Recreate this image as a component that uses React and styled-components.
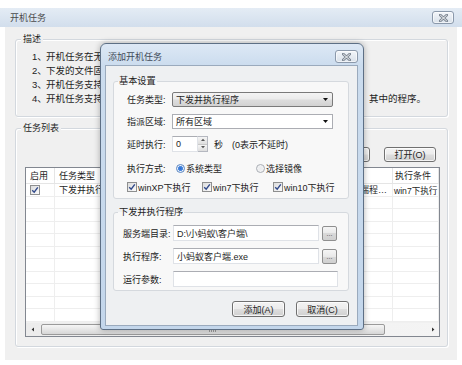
import React from 'react';
import styled, { createGlobalStyle } from 'styled-components';

const GlobalStyle = createGlobalStyle`
  html, body { margin: 0; padding: 0; background: #fff; }
  body {
    font-family: "Liberation Sans", "Noto Sans CJK SC", sans-serif;
    font-size: 9px;
    color: #1e1e1e;
  }
  * { box-sizing: border-box; }
`;

const Window = styled.div`
  position: relative;
  width: 462px;
  height: 365px;
  padding-top: 8px;
  background: #fff;
  overflow: hidden;
`;

const TitleBar = styled.div`
  height: 19px;
  display: flex;
  align-items: center;
  justify-content: space-between;
  padding: 0 8px 0 10px;
  background: linear-gradient(#e4ecf5, #d2deec);
  color: #4a4a4a;
`;

const CloseBtn = styled.div`
  width: ${p => p.$w}px;
  height: 13px;
  border: 1px solid #8b99ab;
  border-radius: 3px;
  background: linear-gradient(#f3f6fa, #d9e1ea);
  display: flex;
  align-items: center;
  justify-content: center;
  box-shadow: inset 0 0 0 1px rgba(255,255,255,.6);
`;

const Body = styled.div`
  margin: 0 5px;
  height: 333px;
  background: #f0f0f0;
  padding: 12px 9px 0 10px;
  display: flex;
  flex-direction: column;
  gap: 11px;
`;

const Group = styled.div`
  position: relative;
  height: ${p => p.$h}px;
  flex: none;
  border: 1px solid #d3d8de;
  border-radius: 3px;
  box-shadow: inset 1px 1px 0 #fff, 1px 1px 0 #fff;
  padding: ${p => p.$pad};
`;

const Caption = styled.span`
  position: absolute;
  left: 5px;
  top: -7px;
  padding: 0 2px;
  line-height: 12px;
  background: #f0f0f0;
`;

const DescLine = styled.div`
  display: flex;
  height: 14px;
  line-height: 14px;
  font-size: 9.5px;
  white-space: nowrap;
`;

const Num = styled.span`
  width: 14px;
  flex: none;
`;

const ButtonRow = styled.div`
  display: flex;
  justify-content: flex-end;
  gap: ${p => p.$gap}px;
  padding-right: ${p => p.$pr || 0}px;
  margin-top: ${p => p.$mt || 0}px;
`;

const Button = styled.div`
  width: ${p => p.$w}px;
  height: ${p => p.$h}px;
  border: 1px solid #707070;
  border-radius: 3px;
  background: linear-gradient(#f3f3f3 0%, #ececec 48%, #dedede 52%, #d0d0d0 100%);
  box-shadow: inset 0 0 0 1px rgba(255,255,255,.75);
  display: flex;
  align-items: center;
  justify-content: center;
  color: #1e1e1e;
`;

const Table = styled.div`
  margin-top: 5px;
  height: 170px;
  border: 1px solid #828790;
  background: #fff;
  display: flex;
  flex-direction: column;
`;

const COLS = '29px 95px 60px 60px 123px 1fr';

const HeaderRow = styled.div`
  display: grid;
  grid-template-columns: ${COLS};
  height: 16px;
  border-bottom: 1px solid #e5e5e5;
`;

const HeadCell = styled.div`
  display: flex;
  align-items: center;
  padding-left: ${p => p.$pl || 4}px;
  border-right: 1px solid #e5e5e5;
  white-space: nowrap;
  overflow: hidden;
`;

const Rows = styled.div`
  display: grid;
  grid-template-columns: ${COLS};
  grid-template-rows: repeat(11, 1fr);
  height: 138px;
`;

const Cell = styled.div`
  display: flex;
  align-items: center;
  padding-left: ${p => p.$pl ?? 4}px;
  border-right: 1px solid #eeeeee;
  border-bottom: 1px solid #eeeeee;
  white-space: nowrap;
  overflow: hidden;
  min-width: 0;
  font-size: ${p => p.$fs || 9}px;
`;

const Ellipsis = styled.span`
  overflow: hidden;
  text-overflow: ellipsis;
  white-space: nowrap;
  padding-right: 2px;
`;

const ScrollBar = styled.div`
  height: 14px;
  display: flex;
  background: linear-gradient(90deg, #ececec, #f4f4f4);
  border-top: 1px solid #f0f0f0;
`;

const ScrollArrow = styled.div`
  width: 13px;
  display: flex;
  align-items: center;
  justify-content: center;
`;

const Thumb = styled.div`
  width: ${p => p.$w}px;
  margin: 1px 0 1px 2px;
  border: 1px solid #9a9a9a;
  border-radius: 2px;
  background: linear-gradient(#f6f6f6, #e6e6e6 50%, #d6d6d6);
  display: flex;
  align-items: center;
  justify-content: center;
`;

const ScrollTrack = styled.div`
  flex: 1;
  display: flex;
`;

/* ----- dialog ----- */

const Dialog = styled.div`
  position: absolute;
  left: 100px;
  top: 43px;
  width: 264px;
  height: 287px;
  border: 1px solid #5d6f85;
  border-radius: 6px 6px 3px 3px;
  background: linear-gradient(180deg, #dde8f5 0px, #cbdcee 22px, #c3d6eb 100%);
  box-shadow: 0 0 6px rgba(0,0,0,.3);
  display: flex;
  flex-direction: column;
  padding: 0 5px 3px 4px;
`;

const DlgTitle = styled.div`
  height: 21px;
  flex: none;
  display: flex;
  align-items: center;
  justify-content: space-between;
  padding: 4px 0 0 3px;
  color: #3f4a57;
`;

const DlgContent = styled.div`
  flex: 1;
  border: 1px solid #9aaabd;
  background: #eef0f2;
  padding: 15px 8px 0 7px;
  display: flex;
  flex-direction: column;
`;

const Panel = styled.div`
  position: relative;
  height: ${p => p.$h}px;
  flex: none;
  margin-top: ${p => p.$mt || 0}px;
  border: 1px solid #d5d9de;
  border-radius: 3px;
  background: #f8f8f8;
  padding: ${p => p.$pad};
`;

const PanelCaption = styled.span`
  position: absolute;
  left: 4px;
  top: -7px;
  line-height: 12px;
  padding: 0 1px;
  background: linear-gradient(#eef0f2 50%, #f8f8f8 50%);
  font-size: 9.2px;
`;

const FormRow = styled.div`
  display: flex;
  align-items: center;
  height: 16px;
  margin-top: ${p => p.$mt || 0}px;
  white-space: nowrap;
`;

const Label = styled.span`
  width: ${p => p.$w}px;
  flex: none;
  color: #222;
`;

const Combo = styled.div`
  width: ${p => p.$w}px;
  height: 15px;
  border: 1px solid ${p => (p.$button ? '#7a7a7a' : '#abadb3')};
  border-radius: ${p => (p.$button ? 2 : 0)}px;
  background: ${p => (p.$button ? 'linear-gradient(#f4f4f4, #ebebeb 48%, #dddddd 52%, #d2d2d2)' : '#fff')};
  display: flex;
  align-items: center;
  justify-content: space-between;
  padding: 0 4px 0 3px;
`;

const Field = styled.div`
  width: ${p => p.$w}px;
  height: 16px;
  border: 1px solid #dfe2e7;
  border-top-color: #abadb3;
  background: #fff;
  display: flex;
  align-items: center;
  padding-left: 3px;
  white-space: nowrap;
  overflow: hidden;
`;

const Spin = styled.div`
  display: flex;
  height: 16px;
`;

const SpinButtons = styled.div`
  width: 10px;
  display: flex;
  flex-direction: column;
  border: 1px solid #b5b8c0;
  border-left: none;
`;

const SpinBtn = styled.div`
  flex: 1;
  display: flex;
  align-items: center;
  justify-content: center;
  background: linear-gradient(#f5f5f5, #dedede);
  border-bottom: ${p => (p.$top ? '1px solid #c8c8c8' : 'none')};
`;

const Text = styled.span`
  margin-left: ${p => p.$ml || 0}px;
  color: ${p => p.$color || '#222'};
`;

const Option = styled.span`
  width: ${p => (p.$w ? `${p.$w}px` : 'auto')};
  flex: none;
  display: flex;
  align-items: center;
  gap: ${p => p.$gap || 1}px;
`;

const RadioDot = styled.span`
  width: 9px;
  height: 9px;
  border-radius: 50%;
  border: 1px solid ${p => (p.$on ? '#5b86c1' : '#a9adb4')};
  background: ${p => (p.$on
    ? 'radial-gradient(circle, #2b6cd0 0, #4c8ae0 2.2px, #e6eef9 2.8px, #f4f6f9 100%)'
    : 'radial-gradient(circle, #e9ebee, #f6f6f6)')};
  flex: none;
`;

const CheckBox = styled.span`
  width: 10px;
  height: 10px;
  border: 1px solid #8e8f8f;
  background: linear-gradient(135deg, #dcdcdc, #fbfbfb);
  display: flex;
  align-items: center;
  justify-content: center;
  flex: none;
`;

const Browse = styled.div`
  width: 15px;
  height: 15px;
  margin-left: 3px;
  border: 1px solid #8f8f8f;
  border-radius: 2px;
  background: linear-gradient(#f5f5f5, #e9e9e9 50%, #d9d9d9 50%, #d0d0d0);
  display: flex;
  align-items: flex-end;
  justify-content: center;
  padding-bottom: 3px;
  font-size: 7px;
  line-height: 7px;
  color: #444;
`;

const XIcon = () => (
  <svg width="9" height="8" viewBox="0 0 9 8">
    <path d="M1.2 1 L7.8 7 M7.8 1 L1.2 7" stroke="#7b8591" strokeWidth="2.6" strokeLinecap="square" />
    <path d="M1.2 1 L7.8 7 M7.8 1 L1.2 7" stroke="#fff" strokeWidth="0.9" />
  </svg>
);

const Check = () => (
  <svg width="8" height="8" viewBox="0 0 8 8">
    <path d="M1.2 4.2 L3.2 6.2 L6.8 1.4" fill="none" stroke="#30498a" strokeWidth="1.4" />
  </svg>
);

const CheckItem = ({ w, children }) => (
  <Option $w={w} $gap={1}>
    <CheckBox><Check /></CheckBox>
    <span>{children}</span>
  </Option>
);

const ArrowDown = () => (
  <svg width="5" height="3" viewBox="0 0 5 3"><polygon points="0,0 5,0 2.5,3" fill="#111" /></svg>
);

const Tri = ({ dir }) => (
  <svg width="4" height="5" viewBox="0 0 4 5">
    {dir === 'up' && <polygon points="0,3 4,3 2,0.8" fill="#555" />}
    {dir === 'down' && <polygon points="0,1 4,1 2,3.2" fill="#555" />}
    {dir === 'left' && <polygon points="3,0.5 3,4.5 0.6,2.5" fill="#333" />}
    {dir === 'right' && <polygon points="1,0.5 1,4.5 3.4,2.5" fill="#333" />}
  </svg>
);

const Grip = () => (
  <svg width="8" height="5" viewBox="0 0 8 5">
    {[0.5, 2.5, 4.5, 6.5].map(x => <line key={x} x1={x} y1="0" x2={x} y2="5" stroke="#8a8a8a" strokeWidth="0.8" />)}
  </svg>
);

const descLines = [
  ['1、', '开机任务在无盘客户机开机时自动执行，无需手动操作。'],
  ['2、', '下发的文件固定下发到客户机的本地磁盘中。'],
  ['3、', '开机任务支持指派到指定的区域或者机器。'],
  ['4、', '开机任务支持下发并执行程序、运行服务端程序，客户机开机后将自动运行、其中的程序。'],
];

const headers = ['启用', '任务类型', '指派区域', '延时执行', '执行程序', '执行条件'];

export default function App() {
  const rows = Array.from({ length: 11 }, (_, i) => i);
  return (
    <>
      <GlobalStyle />
      <Window>
        <TitleBar>
          <span>开机任务</span>
          <CloseBtn $w={22}><XIcon /></CloseBtn>
        </TitleBar>
        <Body>
          <Group $h={78} $pad="10px 8px 0 16px">
            <Caption>描述</Caption>
            {descLines.map(([n, t]) => (
              <DescLine key={n}><Num>{n}</Num><span>{t}</span></DescLine>
            ))}
          </Group>
          <Group $h={219} $pad="18px 7px 0 9px">
            <Caption>任务列表</Caption>
            <ButtonRow $gap={14} $pr={4}>
              <Button $w={52} $h={15}>删除(D)</Button>
              <Button $w={52} $h={15}>打开(O)</Button>
            </ButtonRow>
            <Table>
              <HeaderRow>
                {headers.map((h, i) => (
                  <HeadCell key={h} $pl={i === 5 ? 2 : 4}>{h}</HeadCell>
                ))}
              </HeaderRow>
              <Rows>
                {rows.map(r => (
                  <React.Fragment key={r}>
                    <Cell $pl={4}>{r === 0 && <CheckBox><Check /></CheckBox>}</Cell>
                    <Cell>{r === 0 && '下发并执行程序'}</Cell>
                    <Cell>{r === 0 && '所有区域'}</Cell>
                    <Cell>{r === 0 && '0'}</Cell>
                    <Cell>{r === 0 && <Ellipsis>{'D:\\小蚂蚁\\小蚂蚁客户端程序\\小蚂蚁客户端.exe'}</Ellipsis>}</Cell>
                    <Cell $pl={1} $fs={8.6}>{r === 0 && 'win7下执行'}</Cell>
                  </React.Fragment>
                ))}
              </Rows>
              <ScrollBar>
                <ScrollArrow><Tri dir="left" /></ScrollArrow>
                <ScrollTrack>
                  <Thumb $w={344}><Grip /></Thumb>
                </ScrollTrack>
                <ScrollArrow><Tri dir="right" /></ScrollArrow>
              </ScrollBar>
            </Table>
          </Group>
        </Body>

        <Dialog>
          <DlgTitle>
            <span>添加开机任务</span>
            <CloseBtn $w={23}><XIcon /></CloseBtn>
          </DlgTitle>
          <DlgContent>
            <Panel $h={118} $pad="9px 0 0 13px">
              <PanelCaption>基本设置</PanelCaption>
              <FormRow>
                <Label $w={45}>任务类型:</Label>
                <Combo $w={161} $button><span>下发并执行程序</span><ArrowDown /></Combo>
              </FormRow>
              <FormRow $mt={6}>
                <Label $w={45}>指派区域:</Label>
                <Combo $w={161}><span>所有区域</span><ArrowDown /></Combo>
              </FormRow>
              <FormRow $mt={7}>
                <Label $w={45}>延时执行:</Label>
                <Spin>
                  <Field $w={26}>0</Field>
                  <SpinButtons>
                    <SpinBtn $top><Tri dir="up" /></SpinBtn>
                    <SpinBtn><Tri dir="down" /></SpinBtn>
                  </SpinButtons>
                </Spin>
                <Text $ml={6}>秒</Text>
                <Text $ml={9}>(0表示不延时)</Text>
              </FormRow>
              <FormRow $mt={8}>
                <Label $w={49}>执行方式:</Label>
                <Option $w={80}><RadioDot $on /><span>系统类型</span></Option>
                <Option><RadioDot /><span>选择镜像</span></Option>
              </FormRow>
              <FormRow $mt={3}>
                <CheckItem w={75}>winXP下执行</CheckItem>
                <CheckItem w={71}>win7下执行</CheckItem>
                <CheckItem>win10下执行</CheckItem>
              </FormRow>
            </Panel>
            <Panel $h={79} $mt={13} $pad="12px 0 0 9px">
              <PanelCaption>下发并执行程序</PanelCaption>
              <FormRow>
                <Label $w={50}>服务端目录:</Label>
                <Field $w={146}>{'D:\\小蚂蚁\\客户端\\'}</Field>
                <Browse>...</Browse>
              </FormRow>
              <FormRow $mt={7}>
                <Label $w={50}>执行程序:</Label>
                <Field $w={146}>小蚂蚁客户端.exe</Field>
                <Browse>...</Browse>
              </FormRow>
              <FormRow $mt={7}>
                <Label $w={50}>运行参数:</Label>
                <Field $w={165} />
              </FormRow>
            </Panel>
            <ButtonRow $gap={11} $mt={10}>
              <Button $w={53} $h={16}>添加(A)</Button>
              <Button $w={53} $h={16}>取消(C)</Button>
            </ButtonRow>
          </DlgContent>
        </Dialog>
      </Window>
    </>
  );
}
